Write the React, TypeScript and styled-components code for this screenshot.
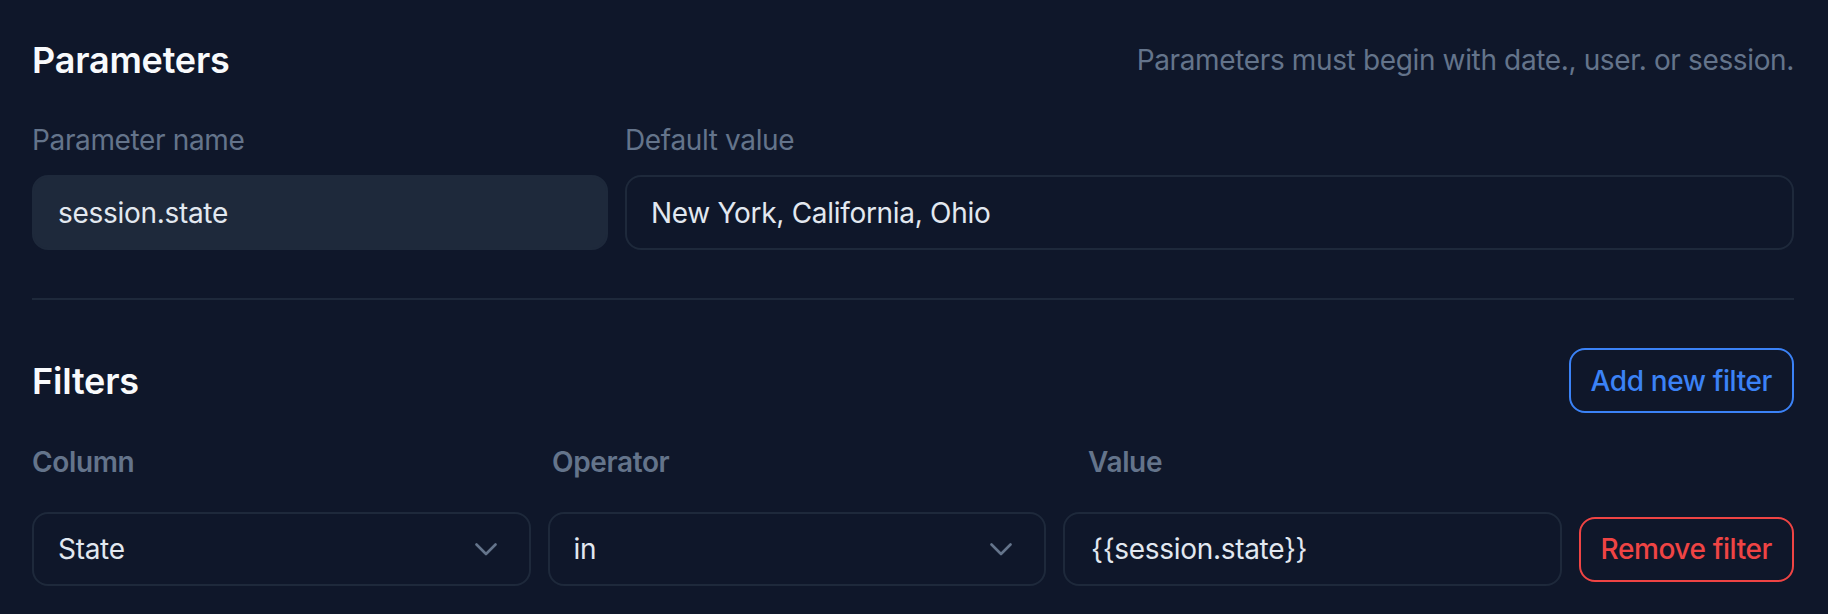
import React from "react";
import styled, { createGlobalStyle } from "styled-components";

const GlobalStyle = createGlobalStyle`
  html, body {
    margin: 0;
    padding: 0;
    background: #0f172a;
  }
  body {
    font-family: Inter, "Noto Sans", "Liberation Sans", sans-serif;
    -webkit-font-smoothing: antialiased;
  }
  * { box-sizing: border-box; }
`;

const Page = styled.div`
  min-height: 614px;
  background: #0f172a;
  padding: 32px 34px 0 32px;
  color: #f1f5f9;
`;

const SectionHeader = styled.div<{ $height?: number }>`
  display: flex;
  align-items: center;
  justify-content: space-between;
  height: ${(p) => p.$height ?? 56}px;
`;

const Title = styled.h2`
  margin: 0;
  font-size: 36px;
  line-height: 56px;
  font-weight: 600;
  color: #f8fafc;
  letter-spacing: -0.2px;
`;

const Hint = styled.p`
  margin: 0;
  font-size: 28px;
  line-height: 40px;
  color: #64748b;
  letter-spacing: -0.36px;
`;

const ParamGrid = styled.div`
  display: grid;
  grid-template-columns: 576px 1fr;
  column-gap: 17px;
  margin-top: 32px;
`;

const Field = styled.div`
  display: flex;
  flex-direction: column;
`;

const Label = styled.label<{ $bold?: boolean }>`
  font-size: 28px;
  line-height: 40px;
  font-weight: ${(p) => (p.$bold ? 600 : 400)};
  color: #64748b;
  letter-spacing: -0.36px;
`;

const TextBox = styled.div<{ $filled?: boolean }>`
  display: flex;
  align-items: center;
  height: 75px;
  margin-top: 15px;
  padding: 0 24px;
  border-radius: 16px;
  border: 2px solid #1e293b;
  background: ${(p) => (p.$filled ? "#1e293b" : "#0f172a")};
  font-size: 28px;
  line-height: 40px;
  color: #e2e8f0;
  letter-spacing: -0.3px;
`;

const Divider = styled.hr`
  border: none;
  height: 2px;
  background: #1e293b;
  margin: 48px 0;
`;

const OutlineButton = styled.button<{ $tone: "blue" | "red" }>`
  height: 65px;
  padding: 0 20px;
  border-radius: 16px;
  background: transparent;
  border: 2px solid ${(p) => (p.$tone === "blue" ? "#3b82f6" : "#ef4444")};
  color: ${(p) => (p.$tone === "blue" ? "#3b82f6" : "#ef4444")};
  font-family: inherit;
  font-size: 28px;
  line-height: 40px;
  font-weight: 500;
  letter-spacing: -0.4px;
  cursor: pointer;
  white-space: nowrap;
`;

const FilterLabels = styled.div`
  display: grid;
  grid-template-columns: 520px 536px 1fr;
  margin-top: 29px;
`;

const FilterRow = styled.div`
  display: grid;
  grid-template-columns: 1fr 1fr 1fr auto;
  column-gap: 17px;
  align-items: center;
  margin-top: 30px;
`;

const Control = styled.div`
  display: flex;
  align-items: center;
  justify-content: space-between;
  height: 74px;
  padding: 0 32px 0 24px;
  border-radius: 16px;
  border: 2px solid #1e293b;
  background: #0f172a;
  font-size: 28px;
  line-height: 40px;
  color: #e2e8f0;
  letter-spacing: -0.3px;
`;

const ValueBox = styled(Control)`
  padding-left: 26px;
`;

const Chevron = () => (
  <svg width="22" height="13" viewBox="0 0 22 13" fill="none">
    <polyline
      points="1.5,1.5 11,11 20.5,1.5"
      stroke="#64748b"
      strokeWidth="2.6"
      strokeLinecap="round"
      strokeLinejoin="round"
    />
  </svg>
);

const filters = [{ column: "State", operator: "in", value: "{{session.state}}" }];

export default function App() {
  return (
    <>
      <GlobalStyle />
      <Page>
        <SectionHeader>
          <Title>Parameters</Title>
          <Hint>Parameters must begin with date., user. or session.</Hint>
        </SectionHeader>

        <ParamGrid>
          <Field>
            <Label>Parameter name</Label>
            <TextBox $filled>session.state</TextBox>
          </Field>
          <Field>
            <Label>Default value</Label>
            <TextBox>New York, California, Ohio</TextBox>
          </Field>
        </ParamGrid>

        <Divider />

        <SectionHeader $height={65}>
          <Title>Filters</Title>
          <OutlineButton $tone="blue">Add new filter</OutlineButton>
        </SectionHeader>

        <FilterLabels>
          <Label $bold>Column</Label>
          <Label $bold>Operator</Label>
          <Label $bold>Value</Label>
        </FilterLabels>

        {filters.map((f, i) => (
          <FilterRow key={i}>
            <Control>
              <span>{f.column}</span>
              <Chevron />
            </Control>
            <Control>
              <span>{f.operator}</span>
              <Chevron />
            </Control>
            <ValueBox>{f.value}</ValueBox>
            <OutlineButton $tone="red">Remove filter</OutlineButton>
          </FilterRow>
        ))}
      </Page>
    </>
  );
}
